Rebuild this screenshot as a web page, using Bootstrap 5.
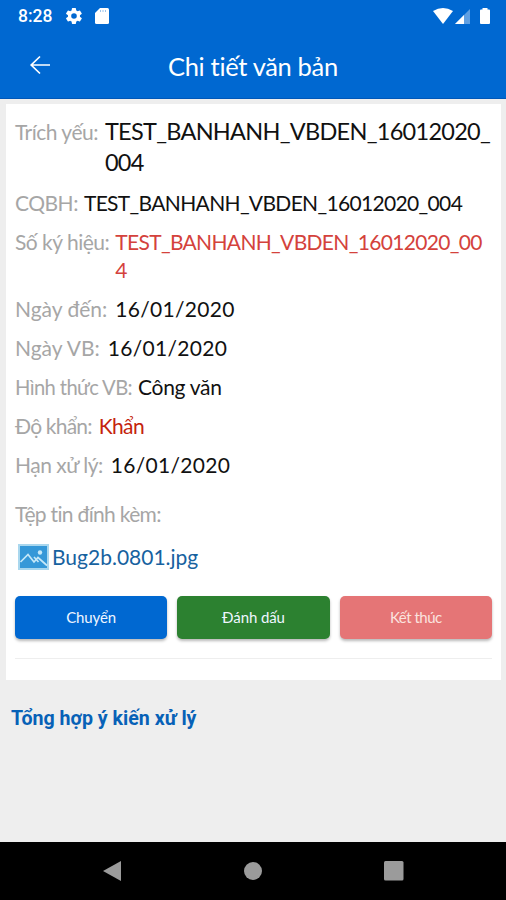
<!DOCTYPE html>
<html lang="vi">
<head>
<meta charset="utf-8">
<meta name="viewport" content="width=device-width, initial-scale=1">
<title>Chi tiết văn bản</title>
<link rel="stylesheet" href="https://cdn.jsdelivr.net/npm/bootstrap@5.3.0/dist/css/bootstrap.min.css">
<style>
body{background:#eee;font-family:Lato,"Liberation Sans",sans-serif;height:900px;overflow:hidden}
.app-top{background:#0068d1;height:99px;border-bottom:1px solid #0057b8;color:#fff}
.status{height:32px;padding:0 15px 0 18px;font:500 17.500px/32px Roboto,sans-serif}
.gear{margin-left:14px}
.sdcard{margin-left:13px}
.titlebar{height:66px;padding-left:29px}
.page-title{font-size:25.5px;line-height:66px;margin-left:117px;padding-top:2px;letter-spacing:-.33px}
.sheet{margin:5px 5px 0 6px;height:576px;padding:14px 9px 0}
.field{font-size:21px;line-height:28px;margin-bottom:11px;white-space:nowrap}
.key{color:#a6a6a6;letter-spacing:-.5px;margin-right:6px}
.val{color:#111}
.date{letter-spacing:.3px;margin-left:2px}
.hot{color:#d4423c;letter-spacing:-.67px}
.urgent{color:#c4230c;letter-spacing:-.6px;margin-left:1px}
.headline{font-size:23.5px;line-height:31px;letter-spacing:-.72px;margin-top:-2px;margin-left:1px}
.agency{letter-spacing:-.66px}
.k-mid{letter-spacing:0}
.k-form{letter-spacing:-.6px;font-size:20.200px}
.form-kind{letter-spacing:-.3px}
.k-tight{letter-spacing:-.8px}
.attach{margin-top:21px;margin-bottom:13px}
.attach .key{letter-spacing:-.68px}
.file-row{padding-left:3px;margin-bottom:23.500px;height:31px}
.file-link{color:#17629f;font-size:21px;line-height:30px;margin-left:3px;letter-spacing:0;font-variant-ligatures:none}
.actions{gap:10px}
.action{height:43px;border:0;border-radius:5px;font-size:15px;color:#eef6ff;box-shadow:0 2px 3px rgba(0,0,0,.28);padding:0;letter-spacing:-.1px}
.go{background:#0068d1}.flag{background:#2c8130}.finish{background:#e57576;letter-spacing:-.5px;color:#fbe3df}
.rule{height:1px;background:#eee;margin-top:19px}
.section{font:700 19.600px/24px Roboto,sans-serif;color:#0761b7;margin:27px 0 0 11px}
.sysnav{background:#000;height:58px;padding:0 102px}
svg{display:block;flex:none}
</style>
</head>
<body class="d-flex flex-column">
<header class="app-top flex-shrink-0">
  <div class="status d-flex align-items-center">
    <span>8:28</span>
    <svg class="gear" width="16" height="16" viewBox="2 2 20 20" fill="#fff"><path d="M19.4 13a7.500 7.500 0 0 0 0-2l2.100-1.600a.5.5 0 0 0 .1-.7l-2-3.400a.5.5 0 0 0-.6-.2l-2.500 1a7 7 0 0 0-1.700-1l-.4-2.600a.5.500 0 0 0-.5-.5h-4a.5.500 0 0 0-.5.5L9 5.100a7 7 0 0 0-1.700 1l-2.500-1a.5.500 0 0 0-.6.2l-2 3.400a.5.500 0 0 0 .1.700L4.500 11a7.500 7.500 0 0 0 0 2l-2.200 1.600a.5.500 0 0 0-.1.700l2 3.400c.1.200.4.3.6.2l2.500-1a7 7 0 0 0 1.700 1l.4 2.600c0 .3.200.5.500.5h4c.3 0 .5-.2.500-.5l.4-2.600a7 7 0 0 0 1.700-1l2.500 1c.2.100.5 0 .6-.2l2-3.400a.5.500 0 0 0-.1-.7ZM12 15.500a3.500 3.500 0 1 1 0-7 3.500 3.500 0 0 1 0 7Z"/></svg>
    <svg class="sdcard" width="14" height="16" viewBox="0 0 14 16"><path d="M5 0h7.500Q14 0 14 1.500v13q0 1.500-1.500 1.500h-11Q0 16 0 14.500V5Z" fill="#fff"/><path d="M5.500 2v2M8 2v2M10.500 2v2" stroke="#9cc4ec"/></svg>
    <svg class="ms-auto" width="58" height="17" viewBox="0 0 58 17"><path d="M0 3Q10-3 20 3L10 16Z" fill="#fff"/><path d="M37 1v15H22Z" fill="#5f9fe2"/><path d="M31 7v9h-9Z" fill="#fff"/><path d="M48 1.500h1.500V0h5v1.500H56q1 0 1 1V15q0 1-1 1h-8q-1 0-1-1V2.500q0-1 1-1Z" fill="#fff"/></svg>
  </div>
  <div class="titlebar d-flex align-items-center">
    <svg width="22" height="20" viewBox="0 0 22 20" fill="none" stroke="#fff" stroke-width="1.700"><path d="M21 10H2M11 1.500 2.200 10l8.800 8.500"/></svg>
    <div class="page-title">Chi tiết văn bản</div>
  </div>
</header>
<main class="flex-grow-1">
  <section class="sheet bg-white">
    <div class="field d-flex"><span class="key">Trích yếu:</span><span class="val headline">TEST_BANHANH_VBDEN_16012020_<br>004</span></div>
    <div class="field d-flex"><span class="key">CQBH:</span><span class="val agency">TEST_BANHANH_VBDEN_16012020_004</span></div>
    <div class="field d-flex"><span class="key">Số ký hiệu:</span><span class="hot">TEST_BANHANH_VBDEN_16012020_00<br>4</span></div>
    <div class="field d-flex"><span class="key k-mid">Ngày đến:</span><span class="val date">16/01/2020</span></div>
    <div class="field d-flex"><span class="key k-mid">Ngày VB:</span><span class="val date">16/01/2020</span></div>
    <div class="field d-flex"><span class="key k-form">Hình thức VB:</span><span class="val form-kind">Công văn</span></div>
    <div class="field d-flex"><span class="key k-tight">Độ khẩn:</span><span class="urgent">Khẩn</span></div>
    <div class="field d-flex"><span class="key">Hạn xử lý:</span><span class="val date">16/01/2020</span></div>
    <div class="field attach"><span class="key">Tệp tin đính kèm:</span></div>
    <div class="file-row d-flex align-items-center">
      <svg width="31" height="26" viewBox="0 0 31 26"><path fill="#a9d7ee" d="M0 0h31v26H0z"/><path fill="#3598d8" d="M2 2h27v22H2z"/><path d="M2.500 18 10 10.500 16 18l4-4.500 9 8M16 13l4.500 5" fill="none" stroke="#c5e8f8" stroke-width="1.700"/><circle cx="22" cy="8.500" r="2.200" fill="#c5e8f8"/></svg>
      <a class="file-link text-decoration-none" href="#">Bug2b.0801.jpg</a>
    </div>
    <div class="actions d-flex">
      <button class="btn action go flex-fill w-100">Chuyển</button>
      <button class="btn action flag flex-fill w-100">Đánh dấu</button>
      <button class="btn action finish flex-fill w-100">Kết thúc</button>
    </div>
    <div class="rule"></div>
  </section>
  <h2 class="section">Tổng hợp ý kiến xử lý</h2>
</main>
<nav class="sysnav d-flex justify-content-between align-items-center flex-shrink-0">
  <svg width="20" height="22" viewBox="0 0 20 22"><path d="M1 11 19 1v20Z" fill="#9b9b9b"/></svg>
  <svg width="18" height="18" viewBox="0 0 18 18"><circle cx="9" cy="9" r="9" fill="#9b9b9b"/></svg>
  <svg width="20" height="20" viewBox="0 0 20 20"><rect width="19.500" height="19.500" rx="1.500" fill="#9b9b9b"/></svg>
</nav>
<script src="https://cdn.jsdelivr.net/npm/bootstrap@5.3.0/dist/js/bootstrap.bundle.min.js"></script>
</body>
</html>
